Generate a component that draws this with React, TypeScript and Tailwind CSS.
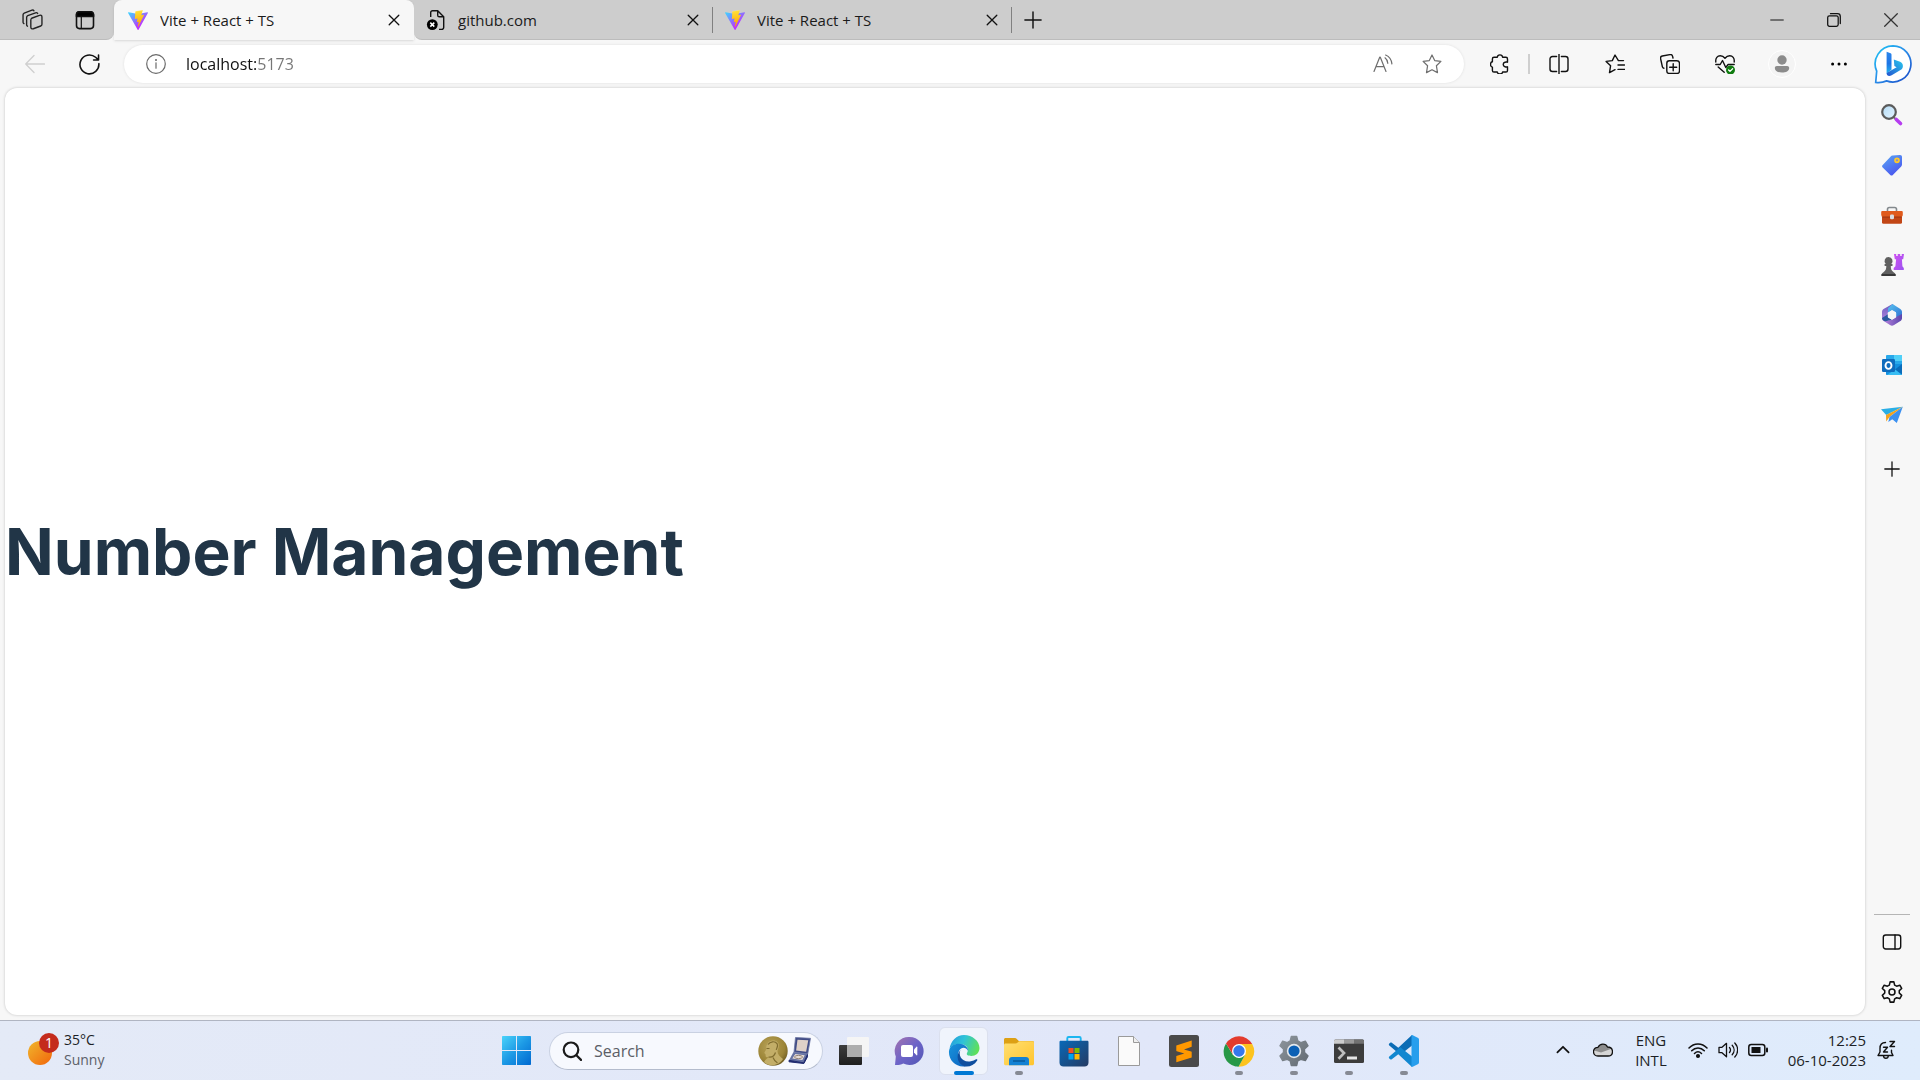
import { useId, useState } from "react";
import type { ReactNode } from "react";

const ui = "font-['Open_Sans','Noto_Sans',sans-serif]";

/* ---------- favicons ---------- */

function ViteLogo() {
  const id = useId();
  return (
    <svg className="size-5 shrink-0" viewBox="0 0 256 257" aria-hidden="true">
      <defs>
        <linearGradient id={id + "a"} x1="-.8%" x2="57.6%" y1="7.7%" y2="78.4%">
          <stop offset="0%" stopColor="#41D1FF" />
          <stop offset="100%" stopColor="#BD34FE" />
        </linearGradient>
        <linearGradient id={id + "b"} x1="43.4%" x2="50.3%" y1="2.2%" y2="89%">
          <stop offset="0%" stopColor="#FFEA83" />
          <stop offset="8.3%" stopColor="#FFDD35" />
          <stop offset="100%" stopColor="#FFA800" />
        </linearGradient>
      </defs>
      <path fill={`url(#${id}a)`} d="M255.153 37.938L134.897 252.976c-2.483 4.44-8.862 4.466-11.382.048L.875 37.958c-2.746-4.814 1.371-10.646 6.827-9.67l120.385 21.517a6.537 6.537 0 0 0 2.322-.004l117.867-21.483c5.438-.991 9.574 4.796 6.877 9.62Z" />
      <path fill={`url(#${id}b)`} d="M185.432.063L96.44 17.501a3.268 3.268 0 0 0-2.634 3.014l-5.474 92.456a3.268 3.268 0 0 0 3.997 3.378l24.777-5.718c2.318-.535 4.413 1.507 3.936 3.838l-7.361 36.047c-.495 2.426 1.782 4.5 4.151 3.78l15.304-4.649c2.372-.72 4.652 1.36 4.15 3.788l-11.698 56.621c-.732 3.542 3.979 5.473 5.943 2.437l1.313-2.028l72.516-144.72c1.215-2.423-.88-5.186-3.54-4.672l-25.505 4.922c-2.396.462-4.435-1.77-3.759-4.114l16.646-57.705c.677-2.35-1.37-4.583-3.769-4.113Z" />
    </svg>
  );
}

function ErrorPageIcon() {
  return (
    <svg className="size-5 shrink-0" viewBox="0 0 20 20" fill="none" stroke="#111" strokeWidth="1.4" aria-hidden="true">
      <path d="M4.7 7V2.6c0-1 .8-1.8 1.8-1.8h5.2l6 6v10.8c0 1-.8 1.8-1.8 1.8H13M11.7.8v4.4c0 1 .8 1.6 1.6 1.6h4.4" />
      <circle cx="6.3" cy="14.6" r="5.4" fill="#000" stroke="none" />
      <path d="m4.3 12.6 4 4m0-4-4 4" stroke="#fff" strokeWidth="1.5" />
    </svg>
  );
}

/* ---------- line icons ---------- */

function Line({ size = 20, color = "#111", width = 1.4, children }: { size?: number; color?: string; width?: number; children: ReactNode }) {
  return (
    <svg width={size} height={size} viewBox="0 0 20 20" fill="none" stroke={color} strokeWidth={width} strokeLinecap="round" strokeLinejoin="round" className="shrink-0" aria-hidden="true">
      {children}
    </svg>
  );
}

const CloseIcon = () => (
  <Line size={12} width={2.2}><path d="m2 2 16 16M18 2 2 18" /></Line>
);

const starPath = "m10 1 2.7 5.6 6.2.8-4.5 4.3 1.1 6.9L10 15.7l-5.5 2.9 1.1-6.9L1.1 7.4l6.2-.8Z";

function BingIcon() {
  return (
    <svg className="size-10" viewBox="0 0 40 40" aria-hidden="true">
      <defs>
        <linearGradient id="bing-ring" x1="0" y1="0" x2="1" y2="1">
          <stop offset="0" stopColor="#1cc4f4" /><stop offset=".5" stopColor="#2a8be8" /><stop offset="1" stopColor="#1947c5" />
        </linearGradient>
        <linearGradient id="bing-stem" x1="0" y1="0" x2="0" y2="1">
          <stop offset="0" stopColor="#2a86ec" /><stop offset=".55" stopColor="#1f75e5" /><stop offset="1" stopColor="#20b4ef" />
        </linearGradient>
        <linearGradient id="bing-bowl" x1="0" y1="1" x2="1" y2="0">
          <stop offset="0" stopColor="#2454d0" /><stop offset="1" stopColor="#29c9ee" />
        </linearGradient>
      </defs>
      <path d="M20 1.8a18.1 18.1 0 1 1-6.4 35.1c-3.2 1.4-7 2-10.9 1.5l1-11.2A18.1 18.1 0 0 1 20 1.8Z" fill="#fff" stroke="url(#bing-ring)" strokeWidth="1.7" />
      <path d="m13.6 7.8 4 1.5c.6.2.9.7.9 1.3v15.2l-4.9 3.6Z" fill="url(#bing-stem)" />
      <path d="m20.800 15.400 6.300 2.300c1.800.7 2.800 2.300 2.800 4.200 0 1.600-.7 3-2 3.900l-9.200 5.500c-3 1.600-5.100.2-5.100-2.400l10-5.600-2.200-1.200Z" fill="url(#bing-bowl)" />
    </svg>
  );
}

/* ---------- browser chrome ---------- */

function Tab({ icon, title, active = false }: { icon: ReactNode; title: string; active?: boolean }) {
  return (
    <div className={active
      ? "flex h-full w-[300px] items-center gap-3 rounded-t-lg bg-[#f7f7f7] pr-[14px] pl-[14px] shadow-sm"
      : "flex h-[26px] w-[299px] items-center gap-3 border-r border-[#808080] pr-[13px] pl-[12px]"}>
      <button role="tab" aria-selected={active} className="flex min-w-0 flex-1 items-center gap-3 text-left text-[15px] leading-5 text-[#1b1b1b]">
        {icon}
        <span className="truncate">{title}</span>
      </button>
      <button aria-label={"Close " + title}><CloseIcon /></button>
    </div>
  );
}

function TitleBar() {
  return (
    <header className="flex h-10 shrink-0 bg-linear-to-b from-[#cdcdcd] from-50% to-[#f7f7f7] to-50%">
      <div className="flex w-[114px] items-center gap-8 rounded-br-lg border-b border-[#bcbcbc] bg-[#cdcdcd] pl-[22px]">
        <button aria-label="Workspaces">
          <Line size={21} color="#222" width={1.3}>
            <path d="M9.2 8.8 16.6 6c1.2-.5 2.4.2 2.4 1.5v7c0 .8-.4 1.4-1.2 1.7l-7 2.6c-1.2.4-2.4-.3-2.4-1.5v-6.900c0-.7.3-1.300.8-1.600Z" />
            <path d="M5.200 16.400c-.6-.3-.8-.8-.8-1.400V8c0-.7.4-1.300 1.100-1.600l7.400-2.800c.8-.3 1.600 0 2 .6" />
            <path d="M1.800 13.900c-.5-.3-.8-.7-.8-1.300V5.500c0-.7.4-1.300 1.100-1.600L9.500 1.100c.8-.3 1.500 0 1.900.6" />
          </Line>
        </button>
        <button aria-label="Tab actions menu">
          <Line width={1.6}>
            <rect x="1.500" y="1.800" width="17" height="16.800" rx="3" />
            <path d="M1.500 6.500V4.800c0-1.600 1.300-3 3-3h11c1.600 0 3 1.400 3 3v1.700Z" fill="#000" />
            <path d="M6.300 7v11.500" strokeWidth="1.200" />
          </Line>
        </button>
      </div>
      <div className="flex" role="tablist"><Tab icon={<ViteLogo />} title="Vite + React + TS" active /></div>
      <div className="flex flex-1 items-center rounded-bl-lg border-b border-[#bcbcbc] bg-[#cdcdcd]">
        <div className="flex" role="tablist">
          <Tab icon={<ErrorPageIcon />} title="github.com" />
          <Tab icon={<ViteLogo />} title="Vite + React + TS" />
        </div>
        <button aria-label="New tab" className="ml-3">
          <Line size={18} width={1.6}><path d="M10 1v18M1 10h18" /></Line>
        </button>
        <div className="ml-auto flex h-full pr-px">
          <button aria-label="Minimize" className="grid w-[57px] place-items-center"><Line size={14}><path d="M1 10h18" /></Line></button>
          <button aria-label="Restore" className="grid w-[57px] place-items-center">
            <Line size={14} width={1.8}><rect x="1" y="4" width="15" height="15" rx="2.500" /><path d="M5 1h10c2.500 0 4 1.500 4 4v10" /></Line>
          </button>
          <button aria-label="Close window" className="grid w-[57px] place-items-center"><Line size={14} width={1.8} color="#333"><path d="m1 1 18 18M19 1 1 19" /></Line></button>
        </div>
      </div>
    </header>
  );
}

function AddressBar() {
  const [url, setUrl] = useState("localhost:5173");
  return (
    <form className="ml-6 flex h-[38px] min-w-0 flex-1 items-center rounded-full bg-white pr-[22px] pl-[22px] shadow-[0_0_3px_rgba(0,0,0,0.1)]" onSubmit={(e) => e.preventDefault()}>
      <button type="button" aria-label="View site information">
        <Line color="#6a6a6a" width={1.2}><circle cx="10" cy="10" r="9.300" /><path d="M10 8.800v5.400" /><circle cx="10" cy="5.900" r=".4" fill="#6a6a6a" /></Line>
      </button>
      <input
        aria-label="Address"
        value={url}
        onChange={(e) => setUrl(e.target.value)}
        className="ml-5 h-6 min-w-0 flex-1 bg-linear-to-r from-[#101010] from-[70px] to-[#767676] to-[70px] bg-clip-text text-base leading-6 text-transparent caret-black outline-none"
      />
      <button type="button" aria-label="Read aloud">
        <Line color="#6e6e6e" width={1.2}><path d="M1 17.500 6.700 3.200h.6L13 17.500M3 12.700h8M12 3.800c1.700 1.300 2.700 3.200 2.800 5.500M12.600 1c3.600 1.500 5.900 4.600 6.300 8.900" /></Line>
      </button>
      <button type="button" aria-label="Add to favorites" className="ml-[29px]"><Line color="#6e6e6e" width={1.2}><path d={starPath} /></Line></button>
    </form>
  );
}

function Toolbar() {
  const cell = "grid h-10 w-[55px] place-items-center";
  return (
    <div className="flex h-12 shrink-0 items-center pl-[25px]">
      <button aria-label="Back"><Line color="#cfcfcf" width={1.3}><path d="M19.500 10H.7M9 1.500.7 10 9 18.500" /></Line></button>
      <button aria-label="Refresh" className="ml-[34px]">
        <Line size={21} width={1.5}><path d="M18.900 9.200A9 9 0 1 1 15.800 3.100L18.500 5.600M18.600 1v4.700h-4.700" /></Line>
      </button>
      <AddressBar />
      <div className="flex items-center pl-2">
        <button aria-label="Extensions" className={cell}>
          <Line><path d="M4 3.300h3.300c.3-3.200 5-3.200 5.300 0h3.300c1 0 1.600.6 1.600 1.600v3.300c-1-.4-4.300-.3-4.300 2.300s3.300 2.700 4.300 2.300v3.600c0 1-.6 1.600-1.600 1.600h-3.300c-.3 2.500-5 2.500-5.300 0H4c-1 0-1.600-.6-1.600-1.600v-3.300c-2.500-.3-2.500-5 0-5.300V4.900c0-1 .6-1.600 1.600-1.600Z" /></Line>
        </button>
        <div className="mx-px h-5 w-[2px] bg-[#cfcfcf]" />
        <button aria-label="Split screen" className="grid h-10 w-14 place-items-center">
          <Line><path d="M10 0v20M7.600 2.500H3.500C2 2.500 1 3.500 1 5v10c0 1.500 1 2.500 2.500 2.500h4.100M12.400 2.500h4.100c1.500 0 2.500 1 2.500 2.500v10c0 1.500-1 2.500-2.500 2.500h-4.100" /></Line>
        </button>
        <button aria-label="Favorites" className={cell}>
          <Line><path d="M18.500 6.600h-5.100L10 1 7.300 6.600l-6.200.8 4.500 4.300-1.100 6.900 5.500-2.900M13 11h6.500M13 15.400h6.500" /></Line>
        </button>
        <button aria-label="Collections" className={cell}>
          <Line><rect x="6.800" y="6.800" width="12.700" height="12.700" rx="2.600" /><path d="M13.200 9.700v7M9.700 13.200h7M3.900 14.200c-.8-.1-1.300-.6-1.500-1.400L.6 4.600C.3 3.300 1 2.300 2.300 2L10 .6c1.300-.2 2.300.4 2.600 1.700l.4 1.700" /></Line>
        </button>
        <button aria-label="Browser essentials" className={cell}>
          <Line>
            <path d="M.8 8C.3 3.900 2.500 1.800 5.300 1.800c2 0 3.400.9 4.700 2.500 1.300-1.600 2.700-2.500 4.700-2.500 2.800 0 5 2.100 4.500 6.200M.8 10.500h4.400l2.300-4 3.300 7 2.300-3h6.100M3.200 13l6 5.300" />
            <circle cx="15.500" cy="16" r="4.500" fill="#107c10" stroke="none" /><path d="m13.600 16 1.400 1.400 2.600-2.600" stroke="#fff" strokeWidth="1.300" />
          </Line>
        </button>
        <button aria-label="Profile" className="grid w-[60px] place-items-center">
          <svg className="size-7" viewBox="0 0 28 28" aria-hidden="true">
            <circle cx="14" cy="14" r="13.500" fill="#f4f4f4" stroke="#fff" /><circle cx="14" cy="10" r="4.700" fill="#8b8b8b" />
            <path d="M8.800 16h10.400c1.100 0 2 .8 2 1.900 0 3-3.300 4.600-7.200 4.600s-7.200-1.600-7.200-4.600c0-1.100.9-1.900 2-1.900Z" fill="#8b8b8b" />
          </svg>
        </button>
        <button aria-label="Settings and more" className="grid h-10 w-[53px] place-items-center">
          <svg className="h-1 w-4" viewBox="0 0 16 4" aria-hidden="true"><circle cx="1.600" cy="2" r="1.500" /><circle cx="8" cy="2" r="1.500" /><circle cx="14.400" cy="2" r="1.500" /></svg>
        </button>
        <button aria-label="Bing chat" className={cell}><BingIcon /></button>
      </div>
    </div>
  );
}

/* ---------- sidebar ---------- */

function Art({ size = 24, box = 24, children }: { size?: number; box?: number; children: ReactNode }) {
  return <svg width={size} height={size} viewBox={`0 0 ${box} ${box}`} className="shrink-0" aria-hidden="true">{children}</svg>;
}

const sidebarApps: { name: string; art: ReactNode }[] = [
  {
    name: "Search",
    art: (
      <Art>
        <defs><linearGradient id="lens" x1="0" y1="0" x2="1" y2="1"><stop offset="0" stopColor="#b4dbf5" /><stop offset="1" stopColor="#e4f4ff" /></linearGradient></defs>
        <path d="m13.500 14 2.500 2.500" stroke="#777" strokeWidth="2" />
        <path d="m16.300 16.500 4.200 4" stroke="#b63df0" strokeWidth="3.600" strokeLinecap="round" />
        <circle cx="9" cy="9" r="6.800" fill="url(#lens)" stroke="#5b5b5b" strokeWidth="2.200" />
      </Art>
    ),
  },
  {
    name: "Shopping",
    art: (
      <Art>
        <defs><linearGradient id="tag" x1="0" y1="0" x2=".6" y2="1"><stop offset="0" stopColor="#5aa9f4" /><stop offset="1" stopColor="#4a56ef" /></linearGradient></defs>
        <path d="M12.500 2.500 20 2c1.300 0 2 .7 2 2v7.500c0 .8-.3 1.400-.8 2l-8.400 8.400c-.8.8-1.700.8-2.500 0l-7.600-7.300c-.8-.8-.8-1.700 0-2.500l8-8.600c.5-.6 1-.9 1.800-1Z" fill="url(#tag)" />
        <circle cx="17" cy="7.300" r="2" fill="#8a90c8" stroke="#ffc928" strokeWidth="1.700" />
      </Art>
    ),
  },
  {
    name: "Tools",
    art: (
      <Art>
        <path d="M7.500 8V6.200c0-1.100.7-1.700 1.800-1.700h5.400c1.100 0 1.800.6 1.800 1.700V8" fill="none" stroke="#83898d" strokeWidth="1.600" />
        <rect x="2" y="12" width="20" height="8.800" rx="1.500" fill="#c24616" /><path d="M2.500 8h19c.8 0 1.300.5 1.300 1.300v2.400c0 1.400-1 2.300-2.300 2.300h-17a2.200 2.200 0 0 1-2.300-2.300V9.300C1.200 8.500 1.700 8 2.500 8Z" fill="#e05a1c" />
        <path d="M2.500 14h19" stroke="#8f2f10" strokeWidth=".8" /><rect x="10" y="11.500" width="4" height="4.800" rx="1.400" fill="#d9dde2" />
      </Art>
    ),
  },
  {
    name: "Games",
    art: (
      <Art>
        <defs><linearGradient id="rook" x1="0" y1="0" x2="1" y2="1"><stop offset="0" stopColor="#d050f2" /><stop offset="1" stopColor="#9b54ef" /></linearGradient></defs>
        <path d="M14 1h2.200v2h1.500V1h2.500v2h1.500V1H24l-.8 5.300h-1.300l.5 7 1.400 1.800v1.900H13.700v-1.900l1.700-1.800.7-7h-1.300Z" fill="url(#rook)" />
        <path d="M8.600 4a4 4 0 0 1 2.700 6.900h1.200v2h-1.700c0 3 .5 4.500 3.100 6.500 1.300.7 1.700 1.300 1.700 3.600H1.500c0-2.300.4-2.900 1.700-3.600 2.600-2 3.100-3.500 3.100-6.500H4.600v-2h1.200A4 4 0 0 1 8.600 4Z" fill="#606060" />
        <path d="M1.500 21h14.100v2H1.500Z" fill="#383838" />
      </Art>
    ),
  },
  {
    name: "Microsoft 365",
    art: (
      <Art>
        <defs>
          <linearGradient id="m1" x1="0" y1="0" x2="0" y2="1"><stop offset="0" stopColor="#6a5cc0" /><stop offset="1" stopColor="#b98be0" /></linearGradient>
          <linearGradient id="m2" x1="0" y1="0" x2="1" y2="1"><stop offset="0" stopColor="#58c4f0" /><stop offset="1" stopColor="#2f6fd2" /></linearGradient>
          <linearGradient id="m3" x1="0" y1="0" x2="1" y2="0"><stop offset="0" stopColor="#b683dc" /><stop offset="1" stopColor="#5a45ad" /></linearGradient>
        </defs>
        <path d="M12.500 1 4 5.800c-1.200.7-2 1.800-2 3.200v6c0 1.400.7 2.600 2 3.300l3.800 1.200V9.500L15.500 4Z" fill="url(#m1)" />
        <path d="m12.500 1 7.500 4.800c1.300.8 2 1.800 2 3.200v6.500L16 15V9.300L12 7 8 9.400V5.200Z" fill="url(#m2)" />
        <path d="M22 11v4c0 1.400-.7 2.600-2 3.300l-6 3.800c-1.300.7-2.700.7-4 0L4 18.300l8-1.800 4-2.400Z" fill="url(#m3)" /><path d="M2 15c0 2 2 3.500 3.800 3.300L12 16.500l-4-2.300v-3Z" fill="#2b5b9f" />
        <path d="m12 8 3.700 2v4.200L12 16.300l-3.700-2.100V10Z" fill="#f7f7f7" stroke="#f7f7f7" strokeLinejoin="round" />
      </Art>
    ),
  },
  {
    name: "Outlook",
    art: (
      <Art>
        <rect x="6" y="2" width="16" height="12" rx="1" fill="#28a8ea" /><path d="M14 2h7c.6 0 1 .4 1 1v5h-8Z" fill="#50d0f8" /><path d="M6 11h16v10c0 .6-.4 1-1 1H7c-.6 0-1-.4-1-1Z" fill="#1490df" />
        <path d="m22 11-7 5.500 7 5Z" fill="#0a6cba" /><path d="m7 22 8-5.500 7 5.500Z" fill="#38bdf3" />
        <rect x="2" y="6" width="13" height="13" rx="1.300" fill="#0f6cbd" /><ellipse cx="8.500" cy="12.500" rx="3" ry="3.400" fill="none" stroke="#fff" strokeWidth="1.900" />
      </Art>
    ),
  },
  {
    name: "Drop",
    art: (
      <Art>
        <path d="M1 6.300 22.800 3.800 6.200 12Z" fill="#2aaee5" />
        <path d="m6 12 16.800-8.200L9.500 14l-3.300 4.500Z" fill="#f5a31c" />
        <path d="M22.800 3.800 16.800 20l-4.500-3.800L8.300 19l1.200-5Z" fill="#3b90f1" />
      </Art>
    ),
  },
];

const gearPath = "M8.300.8h3.400l.7 2.900 1.800 1 2.900-.9 1.700 3-2.200 2v2.100l2.200 2.200-1.700 2.900-2.900-.8-1.800 1-.7 3H8.300l-.7-3-1.800-1-2.900.8-1.700-2.900 2.200-2.200V8.800l-2.200-2 1.700-3 2.900.9 1.800-1Z";

function Sidebar() {
  return (
    <nav aria-label="Sidebar" className="flex w-[55px] shrink-0 flex-col items-center pt-[2px] pr-[2px]">
      {sidebarApps.map((app) => (
        <button key={app.name} aria-label={app.name} className="grid h-[50px] w-full place-items-center">{app.art}</button>
      ))}
      <button aria-label="Customize sidebar" className="grid h-[58px] w-full place-items-center"><Line size={16} width={1.6}><path d="M10 1v18M1 10h18" /></Line></button>
      <div className="mt-auto h-px w-9 bg-[#b5b5b5]" />
      <button aria-label="Hide sidebar" className="mt-[2px] grid h-[50px] w-full place-items-center"><Line><rect x="1.300" y="3" width="17.400" height="14" rx="2.400" /><path d="M13 3v14" /></Line></button>
      <button aria-label="Sidebar settings" className="mb-[3px] grid h-[50px] w-full place-items-center"><Line size={22}><path d={gearPath} /><circle cx="10" cy="10" r="2.700" /></Line></button>
    </nav>
  );
}

/* ---------- taskbar ---------- */

const taskbarApps: { name: string; state?: "open" | "active"; art: ReactNode }[] = [
  {
    name: "Task view",
    art: (
      <Art size={30} box={30}>
        <defs><linearGradient id="tv" x1="0" y1="0" x2="0" y2="1"><stop offset="0" stopColor="#3d3d3d" /><stop offset="1" stopColor="#1f1f1f" /></linearGradient></defs>
        <rect x="0" y="9" width="23" height="20" rx="1" fill="url(#tv)" /><rect x="8" y="1" width="22" height="20" rx="1" fill="#f5f5f5" /><path d="M8 9h15v12H9c-.6 0-1-.4-1-1Z" fill="#adadad" />
      </Art>
    ),
  },
  {
    name: "Chat",
    art: (
      <Art size={30} box={30}>
        <defs><linearGradient id="chat" x1="0" y1="0" x2="1" y2="1"><stop offset="0" stopColor="#a573ae" /><stop offset=".5" stopColor="#6d64c8" /><stop offset="1" stopColor="#5156b4" /></linearGradient></defs>
        <path d="M15.500 1a14 14 0 1 1-6.200 26.500c-2.500 1.300-5.300 1.700-8.300 1.500l.8-8.500A14 14 0 0 1 15.500 1Z" fill="url(#chat)" />
        <rect x="7" y="9" width="12" height="12" rx="2" fill="#fff" /><path d="m20 13.500 2.300-2.600c.5-.5 1-.3 1 .4v7.400c0 .7-.5.900-1 .4L20 16.500Z" fill="#fff" />
      </Art>
    ),
  },
  {
    name: "Microsoft Edge",
    state: "active",
    art: (
      <Art size={32} box={32}>
        <defs>
          <linearGradient id="e1" x1="0" y1=".2" x2="1" y2=".5"><stop offset="0" stopColor="#259ddd" /><stop offset=".45" stopColor="#2fc3d8" /><stop offset="1" stopColor="#5fe05a" /></linearGradient>
          <linearGradient id="e2" x1="0" y1="0" x2="1" y2="1"><stop offset="0" stopColor="#1794dc" /><stop offset="1" stopColor="#0f61be" /></linearGradient>
        </defs>
        <path d="M1.500 14C2.600 6 8.500 0 16 0c8.500 0 15.500 6 15.500 13 0 5-3.800 8-8.300 8-3 0-5.200-1-4.200-2.900 2.200-2.800.4-8.600-6-9C7.500 8.800 3 10.800 1.500 14Z" fill="url(#e1)" />
        <path d="M1 16c.8-5 5-7.200 10-7.200 5.500 0 9.200 3.700 9 7-2-4-6.700-4.200-9 .2-2.500 5 .3 11.800 6.500 15.300C8 32.800.2 25 1 16Z" fill="url(#e2)" />
        <path d="M12.500 15c-2.500 4.500.8 12.300 9.300 11.500 3-.3 5.300-1.600 6.300-2.200.9-.5 1.600.3 1.100 1.200-3 4.700-7.500 6.500-12.400 5.900-7-2-9.800-10.900-4.300-16.400Z" fill="#104f9f" />
      </Art>
    ),
  },
  {
    name: "File Explorer",
    state: "open",
    art: (
      <Art size={30} box={30}>
        <defs><linearGradient id="fold" x1="0" y1="0" x2="1" y2="1"><stop offset="0" stopColor="#ffdf72" /><stop offset="1" stopColor="#ffc42d" /></linearGradient></defs>
        <path d="M0 3.500C0 2.700.7 2 1.500 2h9c1 0 1.600.3 2.300 1l2 2H28.500c.9 0 1.500.7 1.500 1.500V10H0Z" fill="#dda014" />
        <path d="M0 9c0-.9.7-1.500 1.500-1.500h9.800c1 0 1.700-.3 2.400-1L15 5.300h13.500c.8 0 1.500.7 1.500 1.500v21c0 .8-.7 1.500-1.500 1.500h-27C.7 29.300 0 28.600 0 27.800Z" fill="url(#fold)" />
        <path d="M5 29.300V24c0-1.700 1.200-3 3-3h14c1.800 0 3 1.300 3 3v5.300Z" fill="#1381d3" /><path d="M9 25h12" stroke="#075490" strokeWidth="1.300" />
      </Art>
    ),
  },
  {
    name: "Microsoft Store",
    art: (
      <Art size={32} box={32}>
        <defs><linearGradient id="store" x1="0" y1="0" x2="1" y2="1"><stop offset="0" stopColor="#0969b8" /><stop offset="1" stopColor="#243a63" /></linearGradient></defs>
        <path d="M9.300 6V3.300C9.300 2.500 9.800 2 10.600 2h10.800c.8 0 1.300.5 1.300 1.300V6" fill="none" stroke="#1cb6f0" strokeWidth="1.900" />
        <path d="M1.500 7c0-.8.500-1.300 1.300-1.300h26.400c.8 0 1.300.5 1.300 1.300v20.500c0 2.600-1.500 4-4 4h-21c-2.500 0-4-1.400-4-4Z" fill="url(#store)" />
        <path d="M10.500 13h5v5h-5Z" fill="#f25022" /><path d="M16.500 13h5v5h-5Z" fill="#7fba00" /><path d="M10.500 19h5v5.500h-5Z" fill="#00a4ef" /><path d="M16.500 19h5v5.500h-5Z" fill="#ffb900" />
      </Art>
    ),
  },
  {
    name: "Document",
    art: (
      <Art size={32} box={32}>
        <path d="M5.500 1.500h15l6 6v23h-21Z" fill="#fafafa" stroke="#9a9a9a" /><path d="M20.500 1.500v6h6" fill="#eee" stroke="#9a9a9a" />
      </Art>
    ),
  },
  {
    name: "Sublime Text",
    art: (
      <Art size={32} box={32}>
        <rect x="1" y="0" width="30" height="32" rx="2.500" fill="#4a4a4a" />
        <path d="m8.300 10.500 15.400-5v6.200l-7.700 2.700 7.200 2.100c.4.100.5.300.5.700v5.300L8.300 27.300v-6.200l8-2.600-7.500-2.200c-.4-.1-.5-.3-.5-.7Z" fill="#ff9800" />
      </Art>
    ),
  },
  {
    name: "Google Chrome",
    state: "open",
    art: (
      <Art size={32} box={32}>
        <path d="M3 8.500 10 20l6 4-3.500 7.600A15.300 15.300 0 0 1 3 8.500Z" fill="#279847" />
        <path d="M16 9h13.200a15.300 15.300 0 0 1-13.700 22.700L22.500 19Z" fill="#fcc31e" /><path d="m3 8.500 7 11.300L16 9h13.200A15.300 15.300 0 0 0 3 8.500Z" fill="#e33b2e" /><path d="M10 19.500 16 23l6-3-6.500 11.700-3.200-.5Z" fill="#279847" />
        <circle cx="16" cy="16" r="7" fill="#fff" /><circle cx="16" cy="16" r="5.700" fill="#3478ed" />
      </Art>
    ),
  },
  {
    name: "Settings",
    state: "open",
    art: (
      <Art size={32} box={20}>
        <defs><linearGradient id="gear" x1="0" y1="0" x2="1" y2="1"><stop offset="0" stopColor="#8e969d" /><stop offset="1" stopColor="#626a72" /></linearGradient></defs>
        <path d={gearPath} fill="url(#gear)" stroke="url(#gear)" strokeWidth=".8" strokeLinejoin="round" /><circle cx="10" cy="10" r="4" fill="#0b60b5" stroke="#e4e8ec" strokeWidth="1" />
      </Art>
    ),
  },
  {
    name: "Terminal",
    state: "open",
    art: (
      <Art size={32} box={32}>
        <rect x="1" y="4.500" width="30" height="23.500" rx="1.500" fill="#3c3c3c" /><path d="M2.500 4.500H11V8.700H1V6c0-.8.700-1.500 1.500-1.500Z" fill="#cdcdcd" /><path d="M11 4.500h10v4.200H11Z" fill="#9b9b9b" /><path d="M21 4.500h8.500c.8 0 1.500.7 1.500 1.500v2.700H21Z" fill="#717171" />
        <path d="m5.500 12.500 5.500 5.600-5.500 5.600" fill="none" stroke="#bfbfbf" strokeWidth="2.700" /><path d="M14 21.500h10v3H14Z" fill="#e5e5e5" />
      </Art>
    ),
  },
  {
    name: "Visual Studio Code",
    state: "open",
    art: (
      <Art size={32} box={32}>
        <path d="M24 0 10.300 12.800 3.800 7.800c-.5-.4-1.100-.4-1.600 0L1.300 8.600c-.6.6-.6 1.300 0 1.900L7.800 16l4.500 3.800L24 10.500Z" fill="#0b6cb5" />
        <path d="M24 32 10.300 19.200l-6.500 5c-.5.400-1.100.4-1.600 0l-.9-.8c-.6-.6-.6-1.300 0-1.900L7.800 16l4.500-3.800L24 21.500Z" fill="#1287d0" />
        <path d="M23.500.2c.4-.2.800-.2 1.200 0l5 2.500c.8.400 1.300 1.100 1.300 2v22.600c0 .9-.5 1.600-1.300 2l-5 2.500c-.4.200-.8.200-1.200 0Z" fill="#279eed" />
      </Art>
    ),
  },
];

function Weather() {
  return (
    <button className="mb-[2px] ml-[28px] flex items-center justify-self-start text-left">
      <svg className="h-[34px] w-[32px]" viewBox="0 0 32 34" aria-hidden="true">
        <defs><linearGradient id="sun" x1="0" y1="0" x2="1" y2="1"><stop offset="0" stopColor="#f0b72e" /><stop offset="1" stopColor="#f2650a" /></linearGradient></defs>
        <circle cx="12" cy="20" r="12" fill="url(#sun)" /><circle cx="21" cy="10" r="10" fill="#c42b1c" />
        <text x="21" y="15" textAnchor="middle" fontSize="14" fill="#fff">1</text>
      </svg>
      <span className="ml-1 flex flex-col text-sm leading-5 text-[#1c1f26]"><span>35°C</span><span className="text-[#5c6068]">Sunny</span></span>
    </button>
  );
}

function SearchBox() {
  return (
    <label className="mr-[3px] ml-[5px] flex h-[38px] w-[274px] items-center rounded-full border border-[#c9d1e2] border-b-[#b4bccd] bg-[#f7f9fe] pr-[10px] pl-3">
      <Line width={2.2} color="#1a1a1a"><circle cx="9" cy="8.800" r="7.300" /><path d="m14.400 14.300 4.600 4.600" /></Line>
      <input aria-label="Search" placeholder="Search" className="ml-3 w-0 flex-1 bg-transparent text-base leading-6 outline-none placeholder:text-[#5b5e66]" />
      <svg className="h-[30px] w-[54px]" viewBox="0 0 54 30" aria-hidden="true">
        <defs>
          <radialGradient id="coin" cx=".4" cy=".35" r=".7"><stop offset="0" stopColor="#b8a257" /><stop offset=".7" stopColor="#9c8538" /><stop offset="1" stopColor="#6f5d24" /></radialGradient>
        </defs>
        <circle cx="15" cy="15" r="14.700" fill="url(#coin)" />
        <path d="M6 26c1.500-2.800 3.300-3.900 5-4.800-1.300 0-2.600.1-3.200-.8-.5-.8.1-1.300-.2-2-.4-.7-1.400-.9-1.200-1.800.2-.8 1.500-2 1.800-3.300C8 8.500 10.500 4.800 15 4.500c3.800-.2 6.300 2.600 5.700 6.200-.3 2-1.300 3.200-1.200 4.800.1 2.500 2.500 5.500 5.500 7.500-4.500 7-13.500 8.300-19 3Z" fill="#c3ae68" />
        <path d="M10 8.500c2-3 7-4 9.200-.6 1.200 2.300-.6 4-.9 6M10.500 21c3.500.6 6-1.500 7-4.500M15 21.500c1 2.500 2.500 4.500 4.500 5.500M8.500 12.500h3" fill="none" stroke="#806d2f" strokeWidth="1.200" />
        <path d="m37.500 1.500 15 .8-2.800 15.700-13.700-2Z" fill="#414c86" stroke="#6a749f" strokeWidth=".8" /><path d="m39.500 3.700 10.800.6-2.200 11.500-10-1.400Z" fill="#dfd1c8" />
        <path d="m35.500 16 14.200 2-4 8.800L31 24.300Z" fill="#6672a2" /><path d="m31 24.300 14.700 2.500 3.800-8.300v2.300l-3.600 6.700L31 25.800Z" fill="#202b6f" stroke="#202b6f" />
        <path d="m37.300 18 9.400 1.300-2.400 4.800-10-1.600Z" fill="#e7ddd8" /><ellipse cx="40.500" cy="21" rx="4" ry="1.600" fill="none" stroke="#928276" />
      </svg>
    </label>
  );
}

const cloudPath = "M5 7.300c2-4 7.500-4.300 9.500-.3 3.300.1 5 2 5 4.700s-1.800 4.300-4.500 4.300H5c-2.700 0-4.500-1.600-4.500-4.300S2.300 7.500 5 7.300Z";

function Tray() {
  return (
    <div className="mb-[2px] flex items-center justify-self-end pr-6 text-[15px] leading-5 text-[#1c1f26]">
      <button aria-label="Show hidden icons"><Line size={16} width={2.2}><path d="m3 13 7-7 7 7" /></Line></button>
      <button aria-label="OneDrive" className="ml-[22px]">
        <Line width={1.3}>
          <path d={cloudPath} fill="#d6d6d6" stroke="none" />
          <path d="M1 10.500c.3-2 1.800-3.200 4-3.200 2-4 7.500-4.300 9.500-.3 1.800.1 3.200.7 4 1.700L8 12.500Z" fill="#8d8d8d" stroke="none" />
          <path d={cloudPath} />
        </Line>
      </button>
      <button className="ml-[22px] flex flex-col items-center"><span>ENG</span><span>INTL</span></button>
      <button aria-label="Network, volume and battery" className="ml-[21px] flex items-center gap-[10px]">
        <Line width={1.5}><path d="M1 8C6 2.500 14 2.500 19 8M3.700 10.800c3.600-3.900 9-3.900 12.600 0M6.500 13.500c2.200-2.100 4.800-2.100 7 0" /><circle cx="10" cy="16" r="1.300" fill="#111" /></Line>
        <Line width={1.3}><path d="M1 7.300v5.400h3l4.500 4V3.300L4 7.300ZM11.500 7.500c1.200 1.500 1.200 3.500 0 5M14.200 5.200c2.500 2.800 2.500 6.800 0 9.600M16.800 3c3.800 4 3.800 10 0 14" /></Line>
        <Line width={1.5}><rect x=".8" y="4.500" width="16" height="11" rx="2.500" /><rect x="3.500" y="7" width="9" height="6" fill="#111" stroke="none" /><path d="M19 8.500v3" strokeWidth="2" /></Line>
      </button>
      <button className="ml-[20px] flex flex-col items-end"><span>12:25</span><span>06-10-2023</span></button>
      <button aria-label="Notifications" className="ml-[10px]">
        <Line width={1.4}><path d="M9.500 2.500c-4 0-5.500 3-5.500 6v3.500L2 15.500h15l-1.500-3v-2.200M7.500 16c.3 3 4.500 3 4.800 0M7.500 7.200h4L7.500 12h4M14 1.500h4.500L14 6.500h4.500" /></Line>
      </button>
    </div>
  );
}

function Taskbar() {
  return (
    <footer className="grid h-[60px] shrink-0 grid-cols-[1fr_auto_1fr] items-center border-t border-[#b0b5c2] bg-linear-to-r from-[#e4eaf7] via-[#e1e7f9] via-60% to-[#dfecfc]">
      <Weather />
      <div className="flex items-center">
        <button aria-label="Start" className="grid h-12 w-[55px] place-items-center">
          <Art size={29} box={29}>
            <defs><linearGradient id="win" x1="0" y1="0" x2="29" y2="29" gradientUnits="userSpaceOnUse"><stop offset="0" stopColor="#4ad3fa" /><stop offset=".5" stopColor="#1c99e5" /><stop offset="1" stopColor="#0068d0" /></linearGradient></defs>
            <path d="M1 0h13v14H0V1c0-.6.400-1 1-1ZM15 0h13c.6 0 1 .4 1 1v13H15ZM0 15h14v14H1c-.6 0-1-.4-1-1ZM15 15h14v13c0 .6-.4 1-1 1H15Z" fill="url(#win)" />
          </Art>
        </button>
        <SearchBox />
        {taskbarApps.map((app) => (
          <button key={app.name} aria-label={app.name} className="relative grid h-12 w-[55px] place-items-center">
            {app.state === "active" && <span className="absolute inset-x-[3px] inset-y-0 rounded-md border border-[#dbe0ee] bg-[#f0f4fc]" />}
            <span className="relative">{app.art}</span>
            {app.state === "active" && <span className="absolute bottom-0 h-1 w-5 rounded-full bg-[#0078d4]" />}
            {app.state === "open" && <span className="absolute bottom-0 h-1 w-2 rounded-full bg-[#868a94]" />}
          </button>
        ))}
      </div>
      <Tray />
    </footer>
  );
}

export default function App() {
  return (
    <div className={`${ui} flex h-screen flex-col overflow-hidden bg-[#f7f7f7]`}>
      <TitleBar />
      <Toolbar />
      <div className="flex min-h-0 flex-1">
        <main className="mb-[5px] ml-[5px] flex min-w-0 flex-1 items-center rounded-xl bg-white shadow-[0_0_3px_rgba(0,0,0,0.22)]">
          <h1 className="font-['Inter',sans-serif] text-[64px] leading-[70px] font-bold text-[#213547]">Number Management</h1>
        </main>
        <Sidebar />
      </div>
      <Taskbar />
    </div>
  );
}
